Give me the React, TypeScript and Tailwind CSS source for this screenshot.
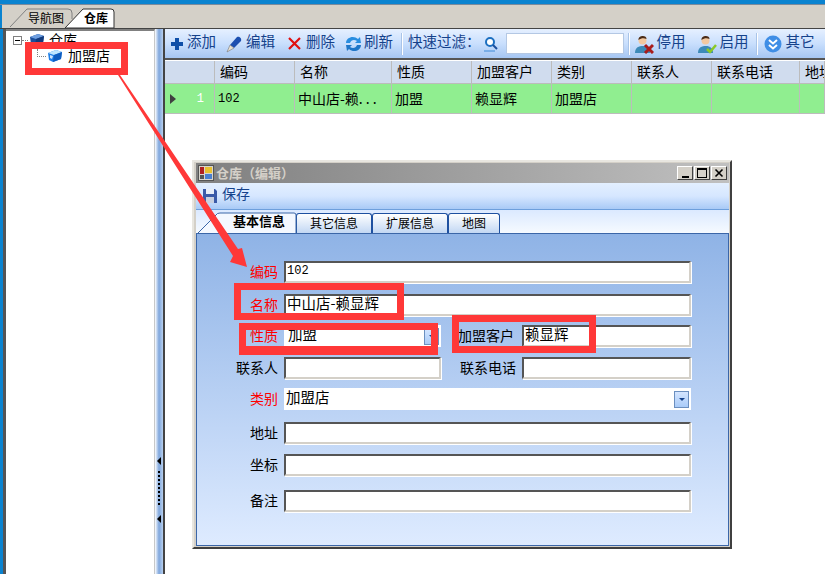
import React from "react";

const cjk = "font-['Noto_Sans_CJK_SC','Liberation_Sans',sans-serif]";
const columns = ["编码", "名称", "性质", "加盟客户", "类别", "联系人", "联系电话", "地址"];
const rowValues = ["102", "中山店-赖...", "加盟", "赖显辉", "加盟店", "", "", ""];

function Cube({ dark }: { dark?: boolean }) {
  return (
    <svg width="16" height="14" viewBox="0 0 16 14" className="shrink-0">
      <path d="M1 4 L9 1 L15 3 L14 10 L6 13 L2 11 Z" fill={dark ? "#1c4f9c" : "#1f7fe8"} />
      <path d="M1 4 L9 1 L15 3 L7 6 Z" fill={dark ? "#6f9fe0" : "#bfe6ff"} />
      <path d="M7 6 L15 3 L14 10 L6 13 Z" fill={dark ? "#123a7c" : "#0f5dc0"} />
      {!dark && <path d="M3 6 L6 7 L5 10 L3 9 Z" fill="#ffffff" opacity="0.8" />}
    </svg>
  );
}

function ToolButton({ icon, label, className }: { icon: React.ReactNode; label: string; className: string }) {
  return (
    <div className={`flex items-center ${className}`}>
      {icon}
      <span className="pb-[4px] text-[14.5px] leading-none text-[#15428b]">{label}</span>
    </div>
  );
}

function Person({ badge }: { badge: "stop" | "ok" }) {
  return (
    <svg width="20" height="20" viewBox="0 0 20 20" className="mr-[3px] shrink-0">
      <path d="M1 19 C1 13 5 12 9 12 C13 12 16 14 16 19 Z" fill="#3d8ab8" />
      <circle cx="8.5" cy="6.5" r="4" fill="#f2c8a0" />
      <path d="M4.5 6 C4 1 13 1 12.5 5 C10 3.5 7 4 4.5 6 Z" fill="#4a2c18" />
      {badge === "stop" ? (
        <path d="M11 11 L19 19 M19 11 L11 19" stroke="#a81c1c" strokeWidth="3" />
      ) : (
        <path d="M10 15 L13 18 L19 11" stroke="#8ac926" strokeWidth="2.5" fill="none" />
      )}
    </svg>
  );
}

function Separator({ className }: { className: string }) {
  return <div className={`h-[22px] w-[2px] border-l border-l-[#a9c4e8] bg-white ${className}`} />;
}

function FormLabel({ text, red, className }: { text: string; red?: boolean; className: string }) {
  return (
    <span className={`shrink-0 pb-[3px] text-right text-[14px] leading-none ${red ? "text-[#ff0000]" : "text-black"} ${className}`}>
      {text}
    </span>
  );
}

function Sunken({ value, className }: { value?: string; className: string }) {
  return (
    <div
      className={`flex h-[22px] items-center border-2 border-t-[#555555] border-r-[#d4d0c8] border-b-[#d4d0c8] border-l-[#555555] bg-white pb-[3px] pl-[1px] leading-none text-black shadow-[1px_1px_0_#ffffff] ${className}`}
    >
      {value}
    </div>
  );
}

function ComboArrow() {
  return (
    <div className="flex h-[17px] w-[15px] items-center justify-center border border-[#6b8fbf] bg-gradient-to-b from-[#d4e5ff] to-[#a9cbf8]">
      <div className="h-0 w-0 border-x-[3px] border-t-[3px] border-x-transparent border-t-[#15428b]" />
    </div>
  );
}

function Combo({ value, className }: { value: string; className: string }) {
  return (
    <div className={`flex h-[22px] items-center justify-between bg-white pr-[2px] text-[14.5px] leading-none text-black ${className}`}>
      <span className="pb-[3px]">{value}</span>
      <ComboArrow />
    </div>
  );
}

function WinButton({ children }: { children: React.ReactNode }) {
  return (
    <div className="flex h-[14px] w-[16px] items-center justify-center border border-t-white border-r-[#404040] border-b-[#404040] border-l-white bg-[#d4d0c8]">
      {children}
    </div>
  );
}

function RedBox({ className }: { className: string }) {
  return <div className={`pointer-events-none absolute border-[7px] border-[#ff3838] ${className}`} />;
}

function DialogTab({ text, className }: { text: string; className: string }) {
  return (
    <div
      className={`flex h-[20px] items-center justify-center rounded-t-[3px] border border-b-0 border-[#1e50a0] bg-gradient-to-b from-white to-[#c2d7f3] pb-[2px] text-[12px] leading-none text-black ${className}`}
    >
      {text}
    </div>
  );
}

export default function App() {
  return (
    <div className={`relative flex h-[574px] w-[825px] flex-col overflow-hidden bg-white ${cjk}`}>
      <div className="h-[4px] bg-[#0a83d0]" />
      <div className="h-px bg-[#7a8a9c]" />

      {/* document tabs */}
      <div className="relative flex h-[24px] items-end border-b border-b-[#444444] bg-[#d4d0c8]">
        <div className="h-full w-[2px] bg-[#0a83d0]" />
        <svg width="120" height="20" viewBox="0 0 120 20" className="absolute bottom-0 left-[8px]">
          <path d="M2 19 L19 1 L60 1 Q64 1 64 5 L64 11" fill="none" stroke="#808080" />
          <path d="M57 20 L75 1 L103 1 Q106 1 106 4 L106 20 Z" fill="#ffffff" stroke="#333333" />
        </svg>
        <span className="absolute top-[6px] left-[28px] text-[12px] leading-[14px] text-black">导航图</span>
        <span className="absolute top-[6px] left-[84px] text-[12px] leading-[14px] font-bold text-black">仓库</span>
      </div>

      <div className="flex min-h-0 flex-1">
        <div className="w-[3px] bg-[#0a83d0]" />
        <div className="w-[3px] bg-[#555555]" />

        {/* tree */}
        <div className="w-[149px] border-t-2 border-r border-t-[#808080] border-r-[#c8c8c8] bg-white pt-[2px]">
          <div className="flex h-[14px] items-center pl-[7px]">
            <div className="flex h-[9px] w-[9px] items-center justify-center border border-[#808080]">
              <div className="h-px w-[5px] bg-black" />
            </div>
            <div className="mr-[1px] w-[6px] border-t border-dotted border-[#808080]" />
            <Cube dark />
            <span className="ml-[4px] pb-[2px] text-[14px] leading-none">仓库</span>
          </div>
          <div className="flex h-[18px] items-center pl-[31px]">
            <div className="mr-[1px] -mt-[6px] h-[8px] w-[9px] border-b border-l border-dotted border-[#808080]" />
            <Cube />
            <span className="ml-[5px] pb-[3px] text-[14px] leading-none">加盟店</span>
          </div>
        </div>

        {/* splitter */}
        <div className="relative w-[10px] border-r-2 border-r-[#444444] bg-gradient-to-r from-[#ffffff] via-[#7fa6dc] to-[#b7cfee]">
          <div className="absolute top-[428px] left-[2px] h-0 w-0 border-y-[4px] border-r-[4px] border-y-transparent border-r-black" />
          <div className="absolute top-[442px] left-[3px] h-[34px] w-[2px] border-l-2 border-dotted border-black" />
          <div className="absolute top-[486px] left-[2px] h-0 w-0 border-y-[4px] border-r-[4px] border-y-transparent border-r-black" />
        </div>

        <div className="flex min-w-0 flex-1 flex-col">
          {/* toolbar */}
          <div className="flex h-[31px] items-center border-b-2 border-b-[#555555] bg-gradient-to-b from-[#e6f0ff] via-[#c9dffd] to-[#a6c6f2]">
            <ToolButton
              className="ml-[5px]"
              label="添加"
              icon={
                <svg width="14" height="14" viewBox="0 0 14 14" className="mr-[3px]">
                  <path d="M5 1 H9 V5 H13 V9 H9 V13 H5 V9 H1 V5 H5 Z" fill="#0f4fa8" />
                </svg>
              }
            />
            <ToolButton
              className="ml-[9px]"
              label="编辑"
              icon={
                <svg width="18" height="18" viewBox="0 0 18 18" className="mr-[3px]">
                  <path d="M5 10 L12 2 C14 1 17 3 16 6 L9 13 Z" fill="#1c4fb0" />
                  <path d="M5 10 L9 13 L2 17 Z" fill="#e8e0d0" stroke="#777777" strokeWidth="0.6" />
                </svg>
              }
            />
            <ToolButton
              className="ml-[12px]"
              label="删除"
              icon={
                <svg width="15" height="15" viewBox="0 0 15 15" className="mr-[4px]">
                  <path d="M2 2 L13 13 M13 2 L2 13" stroke="#e01010" strokeWidth="2.2" />
                </svg>
              }
            />
            <ToolButton
              className="ml-[10px]"
              label="刷新"
              icon={
                <svg width="17" height="18" viewBox="0 0 17 18" className="mr-[2px]">
                  <path d="M1 8 C1 2 9 0 13 4 L15 2 L16 8 L10 8 L12 6 C9 4 6 5 5 8 Z" fill="#2a8ee0" />
                  <path d="M16 10 C16 16 8 18 4 14 L2 16 L1 10 L7 10 L5 12 C8 14 11 13 12 10 Z" fill="#1f76c8" />
                </svg>
              }
            />
            <Separator className="ml-[8px]" />
            <span className="ml-[5px] pb-[4px] text-[14.5px] leading-none whitespace-nowrap text-[#15428b]">快速过滤：</span>
            <svg width="16" height="16" viewBox="0 0 16 16" className="ml-[2px]">
              <circle cx="7" cy="6" r="4" fill="#ffffff" stroke="#1c6fc0" strokeWidth="2" />
              <path d="M10 9 L14 13" stroke="#1c4f9c" strokeWidth="2" />
              <path d="M1 15 H12" stroke="#3d8ad8" />
            </svg>
            <div className="ml-[7px] h-[21px] w-[118px] border border-[#b4c8e4] bg-white" />
            <Separator className="ml-[4px]" />
            <ToolButton className="ml-[4px]" label="停用" icon={<Person badge="stop" />} />
            <ToolButton className="ml-[11px]" label="启用" icon={<Person badge="ok" />} />
            <Separator className="ml-[7px]" />
            <ToolButton
              className="ml-[6px]"
              label="其它"
              icon={
                <svg width="18" height="18" viewBox="0 0 18 18" className="mr-[4px]">
                  <circle cx="9" cy="9" r="8.5" fill="#3f8ee6" />
                  <path d="M5 5 L9 8.5 L13 5 M5 10 L9 13.5 L13 10" fill="none" stroke="#ffffff" strokeWidth="2" />
                </svg>
              }
            />
          </div>

          {/* grid */}
          <div className="mt-px grid h-[23px] grid-cols-[50px_80px_97px_80px_80px_80px_80px_88px_1fr] border-b border-b-[#bcbcbc] bg-[#d0dcee] text-[14px] leading-none text-black">
            <div className="border-r border-r-[#bcbcbc]" />
            {columns.map((name) => (
              <div key={name} className="flex items-center overflow-hidden border-r border-r-[#bcbcbc] pb-[2px] pl-[5px] whitespace-nowrap">
                {name}
              </div>
            ))}
          </div>
          <div className="grid h-[30px] grid-cols-[50px_80px_97px_80px_80px_80px_80px_88px_1fr] border-b border-b-[#bcbcbc] bg-[#90ee90] text-[14px] leading-none text-black">
            <div className="flex items-center justify-between border-r border-r-[#bcbcbc] pr-[10px] pl-[5px]">
              <div className="h-0 w-0 border-y-[5px] border-l-[6px] border-y-transparent border-l-[#404040]" />
              <span className="font-['Liberation_Mono',monospace] text-[12px] text-white">1</span>
            </div>
            {rowValues.map((value, i) => (
              <div
                key={i}
                className={`flex items-center border-r border-r-[#bcbcbc] pl-[3px] whitespace-nowrap ${i === 0 ? "font-['Liberation_Mono',monospace] text-[12px]" : "pb-[2px]"}`}
              >
                {value.endsWith("...") ? (
                  <>
                    {value.slice(0, -3)}
                    <span className="tracking-[3px]">...</span>
                  </>
                ) : (
                  value
                )}
              </div>
            ))}
          </div>
        </div>
      </div>

      {/* edit window */}
      <div className="absolute top-[160px] left-[192px] flex h-[389px] w-[540px] flex-col border-2 border-t-[#e8e6e0] border-r-[#404040] border-b-[#404040] border-l-[#e8e6e0] bg-[#d4d0c8] py-[1px] pr-[1px] pl-[2px]">
        <div className="flex h-[20px] shrink-0 items-center bg-gradient-to-r from-[#808080] to-[#c0c0c0] pr-[2px] pl-[2px]">
          <svg width="16" height="16" viewBox="0 0 16 16" className="mr-[2px]">
            <rect x="0.5" y="0.5" width="15" height="15" fill="#d8d4cc" stroke="#555555" />
            <rect x="2" y="2" width="4" height="7" fill="#b02020" />
            <rect x="7" y="2" width="7" height="6" fill="#e8c030" />
            <rect x="7" y="9" width="7" height="5" fill="#4a80d0" />
            <rect x="2" y="10" width="4" height="4" fill="#555555" />
          </svg>
          <span className="flex-1 pb-[2px] text-[13px] leading-none font-bold text-[#d4d0c8]">仓库（编辑）</span>
          <div className="flex gap-[1px]">
            <WinButton>
              <div className="mt-[7px] h-[2px] w-[7px] bg-black" />
            </WinButton>
            <WinButton>
              <div className="h-[10px] w-[10px] border border-t-2 border-black" />
            </WinButton>
            <WinButton>
              <svg width="10" height="10" viewBox="0 0 10 10">
                <path d="M1.5 1.5 L8.5 8.5 M8.5 1.5 L1.5 8.5" stroke="#000000" strokeWidth="1.6" />
              </svg>
            </WinButton>
          </div>
        </div>

        <div className="flex h-[27px] shrink-0 items-center border-b border-b-[#6d9fdc] bg-gradient-to-b from-[#e3efff] via-[#d6e7ff] to-[#a9caf6] pl-[6px]">
          <svg width="16" height="16" viewBox="0 0 16 16" className="mr-[4px]">
            <path d="M1 1 H13 L15 3 V15 H1 Z" fill="#3a5aa8" />
            <rect x="4" y="1" width="8" height="5" fill="#e8eef8" />
            <rect x="4" y="9" width="8" height="6" fill="#c8d0e0" />
          </svg>
          <span className="pb-[7px] text-[14px] leading-none text-[#15428b]">保存</span>
        </div>

        <div className="relative flex h-[23px] shrink-0 items-end bg-gradient-to-b from-[#dbe9ff] to-[#f6faff] pl-[100px]">
          <svg width="100" height="21" viewBox="0 0 100 21" className="absolute bottom-0 left-[2px]">
            <path d="M0 21 L18 3 Q19 1 22 1 L96 1 Q98 1 98 3 L98 21" fill="#f4f8ff" stroke="#3b66a8" />
          </svg>
          <span className="absolute top-[4px] left-[37px] text-[13px] leading-none font-bold text-black">基本信息</span>
          <DialogTab text="其它信息" className="w-[76px]" />
          <DialogTab text="扩展信息" className="w-[76px]" />
          <DialogTab text="地图" className="w-[52px]" />
        </div>

        <div className="flex min-h-0 flex-1 flex-col border border-[#3b66a8] bg-gradient-to-b from-[#8fb3e6] to-[#deebff] pt-[27px]">
          <div className="flex items-center">
            <FormLabel text="编码" red className="w-[81px]" />
            <Sunken value="102" className="ml-[6px] w-[407px] font-['Liberation_Mono',monospace] text-[12px]" />
          </div>
          <div className="mt-[11px] flex items-center">
            <FormLabel text="名称" red className="w-[81px]" />
            <Sunken value="中山店-赖显辉" className="ml-[6px] w-[407px] text-[14.5px]" />
          </div>
          <div className="mt-[9px] flex items-center">
            <FormLabel text="性质" red className="w-[81px]" />
            <Combo value="加盟" className="ml-[6px] w-[157px] pl-[4px]" />
            <FormLabel text="加盟客户" className="ml-[16px] w-[57px]" />
            <Sunken value="赖显辉" className="ml-[8px] w-[169px] text-[14.5px]" />
          </div>
          <div className="mt-[10px] flex items-center">
            <FormLabel text="联系人" className="w-[81px]" />
            <Sunken className="ml-[6px] w-[157px]" />
            <FormLabel text="联系电话" className="ml-[18px] w-[57px]" />
            <Sunken className="ml-[6px] w-[169px]" />
          </div>
          <div className="mt-[9px] flex items-center">
            <FormLabel text="类别" red className="w-[81px]" />
            <Combo value="加盟店" className="ml-[6px] w-[407px] pl-[2px]" />
          </div>
          <div className="mt-[12px] flex items-center">
            <FormLabel text="地址" className="w-[81px]" />
            <Sunken className="ml-[6px] w-[407px]" />
          </div>
          <div className="mt-[10px] flex items-center">
            <FormLabel text="坐标" className="w-[81px]" />
            <Sunken className="ml-[6px] w-[407px]" />
          </div>
          <div className="mt-[14px] flex items-center">
            <FormLabel text="备注" className="w-[81px]" />
            <Sunken className="ml-[6px] w-[407px]" />
          </div>
        </div>
      </div>

      {/* red annotations */}
      <RedBox className="top-[42px] left-[25px] h-[33px] w-[103px]" />
      <RedBox className="top-[283px] left-[234px] h-[37px] w-[170px]" />
      <RedBox className="top-[323px] left-[239px] h-[32px] w-[199px] border-b-[9px]" />
      <RedBox className="top-[315px] left-[452px] h-[38px] w-[144px]" />
      <svg width="825" height="574" viewBox="0 0 825 574" className="pointer-events-none absolute top-0 left-0">
        <path d="M118 75 L120 75 L238 249 L242 248 L247 267 L230 262 L233 256 Z" fill="#ff3838" />
      </svg>
    </div>
  );
}
